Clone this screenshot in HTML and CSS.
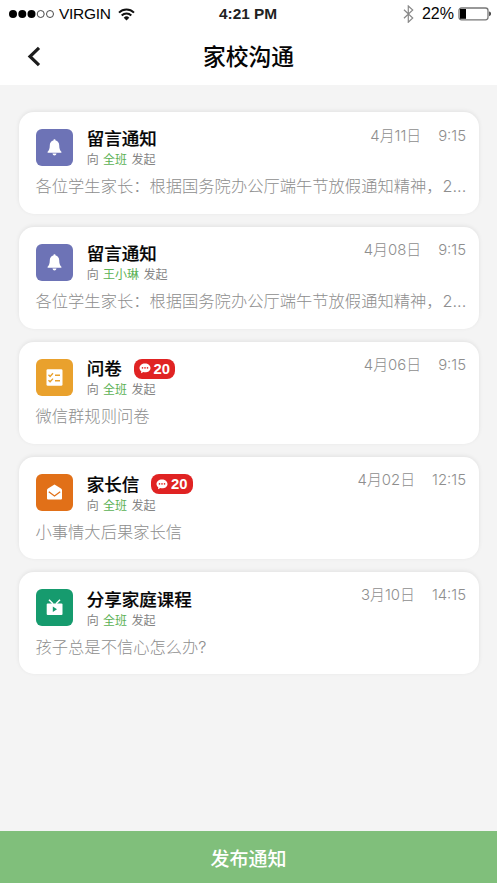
FILE: index.html
```html
<!DOCTYPE html>
<html lang="zh-CN">
<head>
<meta charset="utf-8">
<title>家校沟通</title>
<link rel="stylesheet" href="styles.css">
</head>
<body>
<svg class="defs" width="0" height="0">
  <symbol id="chat" viewBox="0 0 12 11"><path d="M6 .5C2.900.5.5 2.400.5 4.900c0 1.400.7 2.500 1.800 3.300L2 10.300l2.400-1.200c.5.100 1 .2 1.600.2 3.100 0 5.500-1.900 5.500-4.400S9.100.5 6 .5z" fill="#fff"/><g fill="#e02323"><circle cx="3.500" cy="4.900" r=".8"/><circle cx="6" cy="4.900" r=".8"/><circle cx="8.500" cy="4.900" r=".8"/></g></symbol>
</svg>
<div class="status">
  <div class="carrier">
    <svg width="46" height="10" viewBox="0 0 46 10"><g fill="#000"><circle cx="4" cy="5" r="4"/><circle cx="13.300" cy="5" r="4"/><circle cx="22.500" cy="5" r="4"/></g><g fill="none" stroke="#333" stroke-width=".9"><circle cx="31.700" cy="5" r="3.500"/><circle cx="41" cy="5" r="3.500"/></g></svg>
    <span class="name">VIRGIN</span>
    <svg width="17" height="13" viewBox="0 0 17 13"><g fill="none" stroke="#111" stroke-width="2"><path d="M1 4.600a10.600 10.600 0 0 1 15 0"/><path d="M3.700 7.500a6.800 6.800 0 0 1 9.600 0"/></g><path d="M8.500 12.500 5.700 9.700a4 4 0 0 1 5.600 0z" fill="#111"/></svg>
  </div>
  <div class="clock">4:21 PM</div>
  <div class="power">
    <svg width="11" height="18" viewBox="0 0 10 17"><path d="M.7 4.500 9 12.300l-4.200 4V.9L9 4.700.7 12.500" fill="none" stroke="#888" stroke-width="1.100"/></svg>
    <span class="pct">22%</span>
    <svg width="34" height="14" viewBox="0 0 34 14"><rect x="1" y="1" width="29" height="11.800" rx="2.500" fill="#fff" stroke="#777" stroke-width="1.300"/><rect x="2" y="2" width="6" height="9.800" fill="#000"/><path d="M31.200 4.600c2.300.5 2.300 4.100 0 4.600z" fill="#333"/></svg>
  </div>
</div>
<header class="nav">
  <svg class="back" width="14" height="22" viewBox="0 0 14 22"><path d="M12 1.800 3 10.500l9 8.700" fill="none" stroke="#1c1c1c" stroke-width="3.200"/></svg>
  <h1>家校沟通</h1>
</header>
<main class="list">
  <article class="card">
    <div class="top">
      <div class="icon purple"><svg width="17" height="17" viewBox="0 0 17 17"><path d="M8.500.3c.7 0 1.100.5 1.100 1.100 2.200.5 3.600 2.300 3.600 4.800 0 3.600.8 5.200 2.200 6.500v1H1.600v-1c1.400-1.300 2.200-2.900 2.200-6.500 0-2.500 1.400-4.300 3.600-4.800 0-.6.4-1.100 1.100-1.100zM6.500 14.500h4c-.2 1.300-1 1.900-2 1.900s-1.800-.6-2-1.900z" fill="#fff"/></svg></div>
      <div class="head"><div class="title"><h2>留言通知</h2></div><p class="from">向 <b>全班</b> 发起</p></div>
      <div class="time first"><span>4月11日</span><span>9:15</span></div>
    </div>
    <p class="msg">各位学生家长：根据国务院办公厅端午节放假通知精神，2...</p>
  </article>
  <article class="card">
    <div class="top">
      <div class="icon purple"><svg width="17" height="17" viewBox="0 0 17 17"><path d="M8.500.3c.7 0 1.100.5 1.100 1.100 2.200.5 3.600 2.300 3.600 4.800 0 3.600.8 5.200 2.200 6.500v1H1.600v-1c1.400-1.300 2.200-2.900 2.200-6.500 0-2.500 1.400-4.300 3.600-4.800 0-.6.4-1.100 1.100-1.100zM6.500 14.500h4c-.2 1.300-1 1.900-2 1.900s-1.800-.6-2-1.900z" fill="#fff"/></svg></div>
      <div class="head"><div class="title"><h2>留言通知</h2></div><p class="from">向 <b>王小琳</b> 发起</p></div>
      <div class="time"><span>4月08日</span><span>9:15</span></div>
    </div>
    <p class="msg">各位学生家长：根据国务院办公厅端午节放假通知精神，2...</p>
  </article>
  <article class="card">
    <div class="top">
      <div class="icon yellow"><svg width="17" height="17" viewBox="0 0 17 17"><rect x=".5" y=".3" width="16" height="16.400" rx="1.300" fill="#fff"/><path d="m2.500 5.800 1.600 1.600L7 4.200M2.500 11.200l1.600 1.600L7 9.600M9 6.300h5M9 11.800h5" fill="none" stroke="#e9a12d" stroke-width="1.400"/></svg></div>
      <div class="head"><div class="title"><h2>问卷</h2><span class="badge"><svg width="12" height="11"><use href="#chat"/></svg>20</span></div><p class="from">向 <b>全班</b> 发起</p></div>
      <div class="time"><span>4月06日</span><span>9:15</span></div>
    </div>
    <p class="msg">微信群规则问卷</p>
  </article>
  <article class="card">
    <div class="top">
      <div class="icon orange"><svg width="17" height="17" viewBox="0 0 17 17"><path d="M8.500.5 15 4.500q1 .6 1 1.700v8.300q0 1-1 1H2q-1 0-1-1V6.200q0-1.100 1-1.700z" fill="#fff"/><path d="m2.800 7.800 5.700 4.200 5.700-4.200" fill="none" stroke="#e17018" stroke-width="1.300"/></svg></div>
      <div class="head"><div class="title"><h2>家长信</h2><span class="badge"><svg width="12" height="11"><use href="#chat"/></svg>20</span></div><p class="from">向 <b>全班</b> 发起</p></div>
      <div class="time"><span>4月02日</span><span>12:15</span></div>
    </div>
    <p class="msg">小事情大后果家长信</p>
  </article>
  <article class="card">
    <div class="top">
      <div class="icon green"><svg width="17" height="17" viewBox="0 0 17 17"><path d="m3 .8 4 3.900M14 .8l-4 3.900" stroke="#fff" stroke-width="1.600"/><rect x=".7" y="4.500" width="15.800" height="11.500" rx="1" fill="#fff"/><path d="m6.800 7.500 4.200 2.700-4.200 2.700z" fill="#169b6e"/></svg></div>
      <div class="head"><div class="title"><h2>分享家庭课程</h2></div><p class="from">向 <b>全班</b> 发起</p></div>
      <div class="time"><span>3月10日</span><span>14:15</span></div>
    </div>
    <p class="msg">孩子总是不信心怎么办?</p>
  </article>
</main>
<button class="publish">发布通知</button>
</body>
</html>
```
FILE: styles.css
```css
* { box-sizing: border-box; margin: 0; padding: 0; }
body {
  width: 497px; height: 883px; overflow: hidden;
  display: flex; flex-direction: column;
  background: #f4f4f4; color: #050505;
  font-family: Inter, "Noto Sans CJK SC", sans-serif;
}
svg { display: block; flex: none; }
.defs { position: absolute; }
.status {
  height: 28px; padding: 0 5px 0 9px; background: #fff;
  display: grid; grid-template-columns: 210px 60px 1fr; align-items: center;
  font: 15.500px/28px "Liberation Sans", sans-serif;
}
.carrier, .power { display: flex; align-items: center; }
.carrier .name { margin: 0 7px 0 4px; letter-spacing: -.3px; }
.clock { font-weight: bold; font-size: 15.400px; color: #222; white-space: nowrap; }
.power { justify-content: flex-end; }
.pct { margin: 0 4px 0 8px; font-size: 16px; }
.nav {
  height: 57px; padding: 0 27px; background: #fff;
  display: grid; grid-template-columns: 1fr auto 1fr; align-items: center;
}
.nav h1 { font-size: 22.800px; line-height: 57px; font-weight: 500; }
.list { flex: 1; padding: 26.500px 18px 0 19px; display: flex; flex-direction: column; gap: 13px; }
.card {
  height: 102.200px; padding: 17px 13px 0 17px; border-radius: 15px;
  background: #fff; box-shadow: 0 -1px 4px rgba(0, 0, 0, .08);
}
.top { display: flex; height: 37px; }
.icon { width: 37px; height: 37px; border-radius: 6px; display: flex; align-items: center; justify-content: center; }
.purple { background: #6d73b6; }
.yellow { background: #e9a12d; }
.orange { background: #e17018; }
.green { background: #169b6e; }
.head { flex: 1; margin-left: 13.700px; }
.title { display: flex; align-items: center; height: 20px; gap: 12px; }
.title h2 { font-size: 17.500px; line-height: 20px; font-weight: 500; -webkit-text-stroke: .2px; position: relative; top: .6px; }
.badge {
  width: 41.500px; height: 20px; border-radius: 8px; background: #e02323; color: #fff;
  display: flex; align-items: center; justify-content: center; gap: 2.500px;
  font: bold 14.800px/20px "Liberation Sans", sans-serif;
}
.from { font-size: 12px; line-height: 16px; margin-top: 3.500px; color: #858585; word-spacing: 1px; }
.from b { font-weight: 400; color: #5bb155; }
.time { display: flex; gap: 17px; height: 16px; margin-top: -2px; font-size: 14.900px; line-height: 16px; font-weight: 300; color: #8e8e8e; }
.time.first { margin-top: -1px; }
.msg { margin: 8.500px 0 0 -.5px; font-size: 16.300px; line-height: 24px; font-weight: 300; color: #8e8e8e; white-space: nowrap; }
.publish {
  height: 52px; border: 0; background: #80bf7b; color: #fff;
  font: 500 19px/51px "Noto Sans CJK SC", sans-serif;
}
```
